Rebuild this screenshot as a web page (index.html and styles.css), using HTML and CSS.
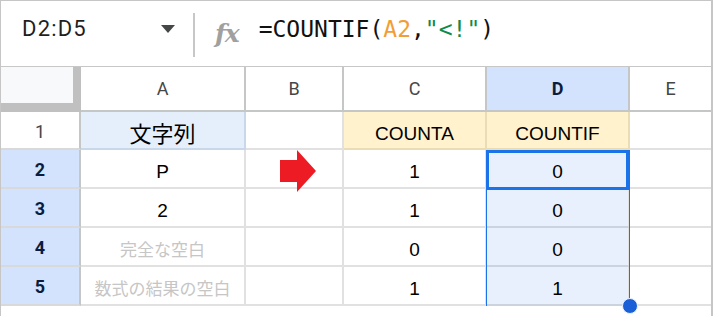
FILE: index.html
```html
<!DOCTYPE html>
<html lang="ja">

<head>
    <meta charset="UTF-8" />
    <meta name="viewport" content="width=device-width, initial-scale=1.0" />
    <title>COUNTIF</title>
    <link rel="stylesheet" href="styles.css">
</head>

<body>
    <div class="sheet">
        <div class="toolbar">
            <div class="namebox">
                <span class="range-name">D2:D5</span>
                <span class="caret"></span>
            </div>
            <div class="divider"></div>
            <span class="fx">fx</span>
            <div class="formula">=COUNTIF(<span class="ref">A2</span>,<span class="str">"&lt;!"</span>)</div>
        </div>

        <div class="grid-wrap">
            <div class="grid">
                <!-- column headers -->
                <div class="cell corner"></div>
                <div class="cell ch">A</div>
                <div class="cell ch">B</div>
                <div class="cell ch">C</div>
                <div class="cell ch ch-sel">D</div>
                <div class="cell ch last">E</div>

                <!-- row 1 -->
                <div class="cell rh">1</div>
                <div class="cell label-a">文字列</div>
                <div class="cell"></div>
                <div class="cell label-fn">COUNTA</div>
                <div class="cell label-fn">COUNTIF</div>
                <div class="cell last"></div>

                <!-- row 2 -->
                <div class="cell rh rh-sel">2</div>
                <div class="cell val">P</div>
                <div class="cell"></div>
                <div class="cell val">1</div>
                <div class="cell val sel">0</div>
                <div class="cell last"></div>

                <!-- row 3 -->
                <div class="cell rh rh-sel">3</div>
                <div class="cell val">2</div>
                <div class="cell"></div>
                <div class="cell val">1</div>
                <div class="cell val sel">0</div>
                <div class="cell last"></div>

                <!-- row 4 -->
                <div class="cell rh rh-sel">4</div>
                <div class="cell muted">完全な空白</div>
                <div class="cell"></div>
                <div class="cell val">0</div>
                <div class="cell val sel">0</div>
                <div class="cell last"></div>

                <!-- row 5 -->
                <div class="cell rh rh-sel">5</div>
                <div class="cell muted">数式の結果の空白</div>
                <div class="cell"></div>
                <div class="cell val">1</div>
                <div class="cell val sel">1</div>
                <div class="cell last"></div>
            </div>

            <svg class="arrow" width="36" height="42" viewBox="0 0 36 42">
                <polygon points="0,10 17,10 17,0 36,21 17,42 17,32 0,32" fill="#ed1c24" />
            </svg>
            <div class="range-box"></div>
            <div class="active-cell"></div>
            <div class="fill-handle"></div>
        </div>
    </div>
</body>

</html>
```

FILE: styles.css
```css
body {
    margin: 0;
    background-color: #fff;
    font-family: 'Liberation Sans', Arial, sans-serif;
}

.sheet {
    width: 713px;
    height: 316px;
    box-sizing: border-box;
    border: 1px solid #c6c6c6;
    border-right-width: 2px;
    border-bottom: none;
    background-color: #fff;
}

/* formula bar */

.toolbar {
    height: 66px;
    box-sizing: border-box;
    border-bottom: 1px solid #c7c7c7;
    display: flex;
    align-items: center;
    padding-bottom: 10px;
}

.namebox {
    width: 174px;
    box-sizing: border-box;
    padding-left: 21px;
    display: flex;
    align-items: center;
    justify-content: space-between;
}

.range-name {
    font-family: Roboto, sans-serif;
    font-size: 22px;
    color: #1f1f1f;
    letter-spacing: 1.2px;
}

.caret {
    width: 0;
    height: 0;
    border-left: 7.5px solid transparent;
    border-right: 7.5px solid transparent;
    border-top: 8px solid #444746;
    margin-top: 1px;
}

.divider {
    align-self: flex-start;
    width: 2px;
    height: 44px;
    margin-top: 12px;
    margin-left: 18px;
    background-color: #c7c7c7;
}

.fx {
    margin-left: 20px;
    margin-top: 10px;
    font-family: 'DejaVu Serif', serif;
    font-style: italic;
    font-weight: bold;
    font-size: 25px;
    color: #a0a0a0;
    letter-spacing: -1px;
}

.formula {
    margin-left: 20px;
    font-family: 'DejaVu Sans Mono', monospace;
    font-size: 23px;
    color: #111;
}

.ref {
    color: #f29e38;
}

.str {
    color: #0f8a4a;
}

/* grid */

.grid-wrap {
    position: relative;
}

.grid {
    display: grid;
    grid-template-columns: 80px 165px 98px 143px 143px 81px;
    grid-template-rows: 45px 38px 39px 39px 39px 39px;
}

.cell {
    box-sizing: border-box;
    border-right: 2px solid #e1e1e1;
    border-bottom: 2px solid #e1e1e1;
    display: flex;
    align-items: center;
    justify-content: center;
    padding-top: 7px;
    font-size: 19px;
    color: #000;
}

.cell.last {
    border-right: none;
}

.corner {
    background-color: #f8f9fa;
    border-right: 8px solid #c0c0c0;
    border-bottom: 9px solid #c0c0c0;
}

.ch {
    padding-top: 0;
    font-family: Roboto, sans-serif;
    font-size: 18px;
    color: #444746;
    border-right-color: #c4c7c5;
    border-bottom-color: #c4c7c5;
}

.ch-sel {
    background-color: #d3e3fd;
    color: #0b1d3f;
    font-weight: bold;
}

.rh {
    padding-top: 2px;
    font-family: Roboto, sans-serif;
    font-size: 18px;
    color: #444746;
    border-right-color: #c4c7c5;
    border-bottom-color: #d9d9d9;
}

.rh-sel {
    background-color: #d3e3fd;
    color: #0b1d3f;
    font-weight: bold;
}

.label-a {
    background-color: #e4effb;
    border-right-color: #c8d8ea;
    border-bottom-color: #c8d8ea;
    font-family: 'Noto Sans CJK JP', sans-serif;
    font-size: 22px;
    padding-top: 4px;
}

.label-fn {
    background-color: #fff2cc;
    border-right-color: #eadcb5;
    border-bottom-color: #eadcb5;
}

.muted {
    font-family: 'Noto Sans CJK JP', sans-serif;
    font-size: 17px;
    color: #c6c6c6;
    padding-top: 4px;
}

.sel {
    background-color: #e8f0fd;
    border-bottom-color: #cbd3de;
}

/* selection overlays */

.arrow {
    position: absolute;
    left: 279px;
    top: 83px;
}

.range-box {
    position: absolute;
    left: 485px;
    top: 83px;
    width: 144px;
    height: 156px;
    box-sizing: border-box;
    border-left: 1px solid #1a73e8;
    border-right: 1px solid #1a73e8;
}

.active-cell {
    position: absolute;
    left: 485px;
    top: 83px;
    width: 143px;
    height: 40px;
    box-sizing: border-box;
    border: 3px solid #1a73e8;
}

.fill-handle {
    position: absolute;
    left: 621px;
    top: 231px;
    width: 16px;
    height: 16px;
    box-sizing: border-box;
    border-radius: 50%;
    background-color: #1a5fd8;
    border: 1px solid #e8f0fd;
}
```
